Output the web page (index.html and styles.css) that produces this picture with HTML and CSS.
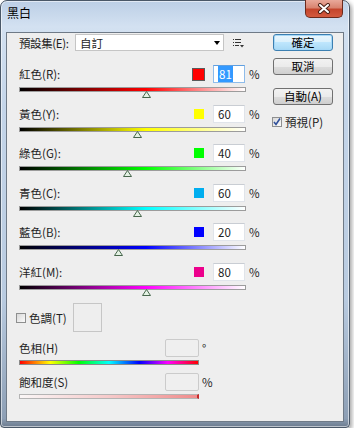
FILE: index.html
```html
<!DOCTYPE html>
<html>
<head>
  <meta charset="utf-8">
  <title>黑白</title>
  <link rel="stylesheet" href="styles.css">
</head>
<body>
  <div class="window">
    <!-- Title bar -->
    <div class="titlebar">
      <span class="title">黑白</span>
      <div class="close-btn">
        <svg width="14" height="11" viewBox="0 0 14 11">
          <path d="M3 2 L11 9 M11 2 L3 9" stroke="#4a2016" stroke-width="4" stroke-linecap="round"/>
          <path d="M3 2 L11 9 M11 2 L3 9" stroke="#fff" stroke-width="2" stroke-linecap="round"/>
        </svg>
      </div>
    </div>

    <div class="client">
      <!-- Left column: preset and sliders -->
      <div class="main-col">
        <div class="preset-row">
          <span class="preset-label">預設集(E):</span>
          <div class="dropdown">
            <span>自訂</span>
            <span class="arrow"></span>
          </div>
          <svg class="preset-menu" width="11" height="9" viewBox="0 0 11 9">
            <rect x="0" y="0" width="1" height="1" fill="#333"/>
            <rect x="2" y="0" width="6" height="1" fill="#333"/>
            <rect x="0" y="3" width="1" height="1" fill="#333"/>
            <rect x="2" y="3" width="6" height="1" fill="#333"/>
            <rect x="0" y="6" width="1" height="1" fill="#333"/>
            <rect x="2" y="6" width="4" height="1" fill="#333"/>
            <path d="M7 6 H11 L9 8.5 Z" fill="#333"/>
          </svg>
        </div>

        <div class="channels">
          <div class="channel">
            <div class="channel-top">
              <span class="channel-label">紅色(R):</span>
              <span class="swatch-wrap focused"><span class="swatch sw-red"></span></span>
              <span class="value-box focused"><span class="selected">81</span></span>
              <span class="unit">%</span>
            </div>
            <div class="slider">
              <div class="bar bar-red"></div>
              <svg class="thumb" style="left: 56.2%;" width="9" height="7" viewBox="0 0 9 7"><path d="M4.5 0.5 L8.5 6.5 H0.5 Z" fill="#e4f2e4" stroke="#47664c"/></svg>
            </div>
          </div>

          <div class="channel">
            <div class="channel-top">
              <span class="channel-label">黃色(Y):</span>
              <span class="swatch-wrap"><span class="swatch sw-yellow"></span></span>
              <span class="value-box">60</span>
              <span class="unit">%</span>
            </div>
            <div class="slider">
              <div class="bar bar-yellow"></div>
              <svg class="thumb" style="left: 52%;" width="9" height="7" viewBox="0 0 9 7"><path d="M4.5 0.5 L8.5 6.5 H0.5 Z" fill="#e4f2e4" stroke="#47664c"/></svg>
            </div>
          </div>

          <div class="channel">
            <div class="channel-top">
              <span class="channel-label">綠色(G):</span>
              <span class="swatch-wrap"><span class="swatch sw-green"></span></span>
              <span class="value-box">40</span>
              <span class="unit">%</span>
            </div>
            <div class="slider">
              <div class="bar bar-green"></div>
              <svg class="thumb" style="left: 48%;" width="9" height="7" viewBox="0 0 9 7"><path d="M4.5 0.5 L8.5 6.5 H0.5 Z" fill="#e4f2e4" stroke="#47664c"/></svg>
            </div>
          </div>

          <div class="channel">
            <div class="channel-top">
              <span class="channel-label">青色(C):</span>
              <span class="swatch-wrap"><span class="swatch sw-cyan"></span></span>
              <span class="value-box">60</span>
              <span class="unit">%</span>
            </div>
            <div class="slider">
              <div class="bar bar-cyan"></div>
              <svg class="thumb" style="left: 52%;" width="9" height="7" viewBox="0 0 9 7"><path d="M4.5 0.5 L8.5 6.5 H0.5 Z" fill="#e4f2e4" stroke="#47664c"/></svg>
            </div>
          </div>

          <div class="channel">
            <div class="channel-top">
              <span class="channel-label">藍色(B):</span>
              <span class="swatch-wrap"><span class="swatch sw-blue"></span></span>
              <span class="value-box">20</span>
              <span class="unit">%</span>
            </div>
            <div class="slider">
              <div class="bar bar-blue"></div>
              <svg class="thumb" style="left: 44%;" width="9" height="7" viewBox="0 0 9 7"><path d="M4.5 0.5 L8.5 6.5 H0.5 Z" fill="#e4f2e4" stroke="#47664c"/></svg>
            </div>
          </div>

          <div class="channel">
            <div class="channel-top">
              <span class="channel-label">洋紅(M):</span>
              <span class="swatch-wrap"><span class="swatch sw-magenta"></span></span>
              <span class="value-box">80</span>
              <span class="unit">%</span>
            </div>
            <div class="slider">
              <div class="bar bar-magenta"></div>
              <svg class="thumb" style="left: 56%;" width="9" height="7" viewBox="0 0 9 7"><path d="M4.5 0.5 L8.5 6.5 H0.5 Z" fill="#e4f2e4" stroke="#47664c"/></svg>
            </div>
          </div>
        </div>

        <!-- Tint section -->
        <div class="tint-row">
          <div class="tint-check">
            <span class="checkbox"></span>
            <span class="check-label">色調(T)</span>
          </div>
          <div class="tint-swatch"></div>
        </div>

        <div class="tint-field hue-field">
          <div class="field-top">
            <span class="field-label">色相(H)</span>
            <span class="value-box disabled"></span>
            <span class="field-unit">°</span>
          </div>
          <div class="bar bar-hue"></div>
        </div>

        <div class="tint-field sat-field">
          <div class="field-top">
            <span class="field-label">飽和度(S)</span>
            <span class="value-box disabled"></span>
            <span class="field-unit">%</span>
          </div>
          <div class="bar bar-sat"></div>
        </div>
      </div>

      <!-- Right column: buttons -->
      <div class="side-col">
        <div class="btn default">確定</div>
        <div class="btn cancel">取消</div>
        <div class="btn auto">自動(A)</div>
        <div class="preview-row">
          <span class="checkbox checked">
            <svg width="8" height="8" viewBox="0 0 8 8"><path d="M1 4 L3 6.5 L7 0.5" fill="none" stroke="#2f4f9a" stroke-width="1.6"/></svg>
          </span>
          <span class="check-label">預視(P)</span>
        </div>
      </div>
    </div>
  </div>
</body>
</html>
```

FILE: styles.css
```css
/* Global */
body {
  margin: 0;
  background-color: #fff;
  font-family: "Noto Sans CJK TC", "Noto Sans", sans-serif;
  font-size: 11.5px;
  color: #1e1e1e;
}

/* Window frame (Windows 7 style) */
.window {
  width: 350px;
  height: 428px;
  box-sizing: border-box;
  border: 1px solid #4a5868;
  border-radius: 7px 7px 4px 4px;
  padding: 0 5px 5px 5px;
  background: linear-gradient(to bottom, #bccfe6 0%, #d3e1f1 6%, #c4d5e9 25%, #b9cbe0 70%, #8d9fb5 98%, #6c7b8e 100%);
  box-shadow: inset 0 0 0 1px rgba(255, 255, 255, 0.55), 2px 2px 4px rgba(0, 0, 0, 0.35);
  display: flex;
  flex-direction: column;
}

.titlebar {
  height: 31px;
  display: flex;
  align-items: flex-start;
}

.title {
  margin-left: 1px;
  margin-top: 4px;
  line-height: 16px;
  font-size: 12px;
  color: #000;
}

.close-btn {
  margin-left: auto;
  margin-right: 1px;
  margin-top: -1px;
  width: 38px;
  height: 18px;
  box-sizing: border-box;
  border: 1px solid #6b2a1c;
  border-top: none;
  border-radius: 0 0 5px 5px;
  background: linear-gradient(to bottom, #e9a99a 0%, #d98470 45%, #c4452c 55%, #d35a3e 100%);
  display: flex;
  align-items: center;
  justify-content: center;
}

/* Client area */
.client {
  flex: 1;
  border: 1px solid #6f7a87;
  background-color: #eeeeee;
  display: flex;
  gap: 13px;
  padding: 1px 9px 0 12px;
}

.main-col {
  width: 241px;
}

/* Preset row */
.preset-row {
  display: flex;
  align-items: center;
  height: 17px;
}

.preset-label {
  width: 56px;
  white-space: nowrap;
  letter-spacing: -0.4px;
}

.dropdown {
  width: 149px;
  height: 17px;
  box-sizing: border-box;
  border: 1px solid #c5c5c5;
  background-color: #fff;
  padding-left: 4px;
  display: flex;
  align-items: center;
}

.dropdown .arrow {
  margin-left: auto;
  margin-right: 3px;
  width: 0;
  height: 0;
  border-left: 3.5px solid transparent;
  border-right: 3.5px solid transparent;
  border-top: 4px solid #000;
}

.preset-menu {
  margin-left: 9px;
  margin-top: 2px;
}

/* Channel sliders */
.channels {
  margin-top: 14px;
}

.channel {
  height: 39.5px;
}

.channel-top {
  display: flex;
  align-items: center;
  height: 18px;
}

.channel-label {
  flex: 1;
}

.swatch-wrap {
  width: 13px;
  height: 13px;
  box-sizing: border-box;
  margin-right: 8px;
  display: flex;
  align-items: center;
  justify-content: center;
}

.swatch {
  width: 10px;
  height: 10px;
}

.swatch-wrap.focused {
  border: 1px solid #5a5a5a;
}

.swatch-wrap.focused .swatch {
  width: 11px;
  height: 11px;
}

.sw-red { background-color: #ff0000; }
.sw-yellow { background-color: #ffff00; }
.sw-green { background-color: #00ff00; }
.sw-cyan { background-color: #00aeef; }
.sw-blue { background-color: #0000ff; }
.sw-magenta { background-color: #ec008c; }

.value-box {
  width: 32px;
  height: 18px;
  box-sizing: border-box;
  border: 1px solid #e0e4ea;
  border-top-color: #c9cdd3;
  background-color: #fff;
  padding-left: 4px;
  line-height: 16px;
  color: #222;
}

.value-box.focused {
  border-color: #8fbcea;
  border-top-color: #5f9fe0;
}

.selected {
  background-color: #3399ff;
  color: #fff;
  padding: 0 1px;
}

.unit {
  width: 15px;
  box-sizing: border-box;
  padding-left: 4px;
}

.slider {
  position: relative;
  width: 227px;
  margin-top: 4px;
}

.thumb {
  position: absolute;
  top: 4px;
  margin-left: -4.5px;
}

.bar {
  width: 227px;
  height: 5px;
  box-sizing: border-box;
  border: 1px solid #9c9c9c;
}

.bar-red { background: linear-gradient(to right, #000 0%, #ff0000 56%, #fff 100%); }
.bar-yellow { background: linear-gradient(to right, #000 0%, #ffff00 56%, #fff 100%); }
.bar-green { background: linear-gradient(to right, #000 0%, #00ff00 56%, #fff 100%); }
.bar-cyan { background: linear-gradient(to right, #000 0%, #00ffff 56%, #fff 100%); }
.bar-blue { background: linear-gradient(to right, #000 0%, #0000ff 56%, #fff 100%); }
.bar-magenta { background: linear-gradient(to right, #000 0%, #ff00ff 56%, #fff 100%); }

/* Tint section */
.tint-row {
  display: flex;
  align-items: center;
  height: 29px;
  margin-top: 1px;
}

.tint-check {
  width: 57px;
  margin-left: -3px;
  display: flex;
  align-items: center;
}

.checkbox {
  width: 10px;
  height: 10px;
  box-sizing: border-box;
  border: 1px solid #8e8f8f;
  background: linear-gradient(135deg, #d8d8d8, #fbfbfb);
  display: flex;
  align-items: center;
  justify-content: center;
}

.check-label {
  margin-left: 3px;
}

.tint-swatch {
  width: 29px;
  height: 29px;
  box-sizing: border-box;
  border: 1px solid #c6c6c6;
}

.tint-field {
  width: 180px;
}

.hue-field {
  margin-top: 7px;
}

.sat-field {
  margin-top: 8px;
}

.field-top {
  display: flex;
  align-items: center;
  height: 18px;
  margin-bottom: 3px;
}

.field-label {
  width: 146px;
  flex-shrink: 0;
}

.value-box.disabled {
  width: 34px;
  flex-shrink: 0;
  border: 1px solid #cbcbcb;
  border-radius: 2px;
  background-color: #efefef;
}

.field-unit {
  width: 0;
  margin-left: 3px;
  white-space: nowrap;
}

.bar-hue {
  width: 180px;
  border-color: #8a8a8a;
  background: linear-gradient(to right, #ff0000 0%, #ffff00 17%, #00ff00 33%, #00ffff 50%, #0000ff 67%, #ff00ff 83%, #ff0000 100%);
}

.bar-sat {
  width: 180px;
  border-color: #b4b4b4;
  border-right: 2px solid #c42a2a;
  background: linear-gradient(to right, #faf6f6 0%, #f6caca 50%, #f08c8c 100%);
}

/* Buttons column */
.side-col {
  width: 60px;
  display: flex;
  flex-direction: column;
}

.btn {
  height: 17px;
  box-sizing: border-box;
  border: 1px solid #707070;
  border-radius: 3px;
  background: linear-gradient(to bottom, #f2f2f2 0%, #ebebeb 50%, #dddddd 50%, #cfcfcf 100%);
  text-align: center;
  line-height: 15px;
  color: #000;
}

.btn.default {
  border-color: #3c7fb1;
  background: linear-gradient(to bottom, #eaf6fd 0%, #d9f0fc 50%, #bee6fd 50%, #a7d9f5 100%);
  box-shadow: inset 0 0 0 1px #a6d8f7;
}

.btn.cancel {
  margin-top: 7px;
}

.btn.auto {
  margin-top: 13px;
}

.preview-row {
  display: flex;
  align-items: center;
  height: 10px;
  margin-top: 12px;
  margin-left: -1px;
}
```
